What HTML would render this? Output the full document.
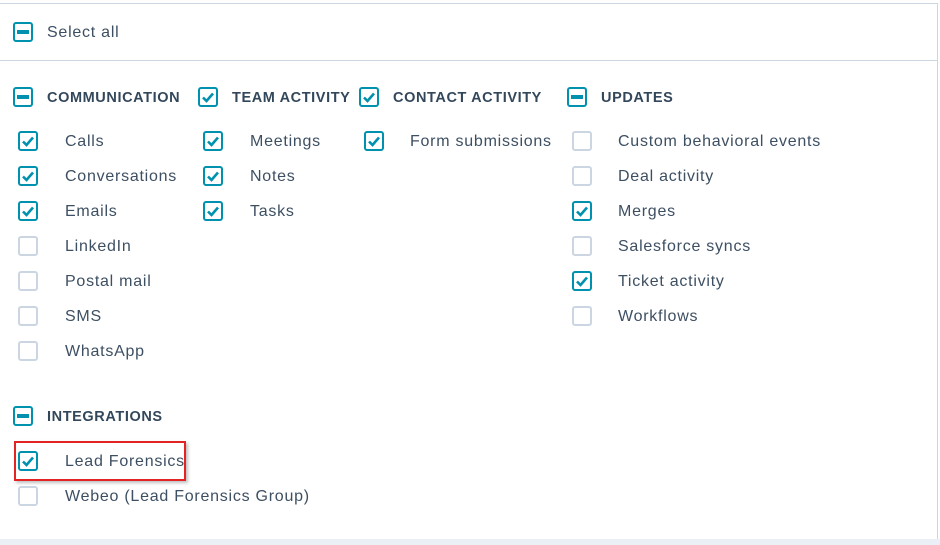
<html><head><style>
body{margin:0;width:940px;height:545px;background:#fff;font-family:"Liberation Sans",sans-serif;color:#33475b;position:relative;overflow:hidden}
.frame{position:absolute;left:-2px;top:3px;width:939px;height:535px;border:1px solid #cbd6e2;border-left:none}
.sep{position:absolute;left:0;top:60px;width:937px;height:1px;background:#cbd6e2}
.bot{position:absolute;left:0;top:539px;width:940px;height:6px;background:#eaf0f6}
.cb{position:absolute;width:16px;height:16px;border:2px solid #0091ae;border-radius:3px;background:#fff}
.cb.u{border-color:#cbd6e2}
.cb.m::after{content:"";position:absolute;left:2px;top:6px;width:12px;height:4px;background:#0091ae}
.cb.c svg{position:absolute;left:1px;top:1px}
.t{position:absolute;font-size:16px;letter-spacing:0.75px;line-height:20px;white-space:nowrap;color:#3d4f62}
.h{position:absolute;font-size:14.5px;letter-spacing:0.6px;font-weight:bold;line-height:20px;white-space:nowrap;color:#33475b}
.red{position:absolute;left:14px;top:441px;width:168px;height:36px;border:2px solid #e32424;box-shadow:2px 2px 3px rgba(0,0,0,.25)}
</style></head><body>
<div class="frame"></div><div class="sep"></div><div class="bot"></div>
<div class="red"></div>
<script>
const ck='<svg width="14" height="14" viewBox="0 0 14 14"><path d="M2 7.5L5.5 11L12 3.5" stroke="#0091ae" stroke-width="2.6" fill="none"/></svg>';
function cb(x,y,s){document.write('<div class="cb '+s+'" style="left:'+x+'px;top:'+y+'px">'+(s=='c'?ck:'')+'</div>')}
function t(x,y,s,c){document.write('<div class="'+(c||'t')+'" style="left:'+x+'px;top:'+(y+1)+'px">'+s+'</div>')}
cb(13,22,'m');t(47,22,'Select all');
cb(13,87,'m');t(47,87,'COMMUNICATION','h');
cb(198,87,'c');t(232,87,'TEAM ACTIVITY','h');
cb(359,87,'c');t(393,87,'CONTACT ACTIVITY','h');
cb(567,87,'m');t(601,87,'UPDATES','h');
const c1=[['Calls',1],['Conversations',1],['Emails',1],['LinkedIn',0],['Postal mail',0],['SMS',0],['WhatsApp',0]];
c1.forEach((a,i)=>{cb(18,131+35*i,a[1]?'c':'u');t(65,131+35*i,a[0])});
['Meetings','Notes','Tasks'].forEach((a,i)=>{cb(203,131+35*i,'c');t(250,131+35*i,a)});
cb(364,131,'c');t(410,131,'Form submissions');
const c4=[['Custom behavioral events',0],['Deal activity',0],['Merges',1],['Salesforce syncs',0],['Ticket activity',1],['Workflows',0]];
c4.forEach((a,i)=>{cb(572,131+35*i,a[1]?'c':'u');t(618,131+35*i,a[0])});
cb(13,406,'m');t(47,406,'INTEGRATIONS','h');
cb(18,451,'c');t(65,451,'Lead Forensics');
cb(18,486,'u');t(65,486,'Webeo (Lead Forensics Group)');
</script>
</body></html>
